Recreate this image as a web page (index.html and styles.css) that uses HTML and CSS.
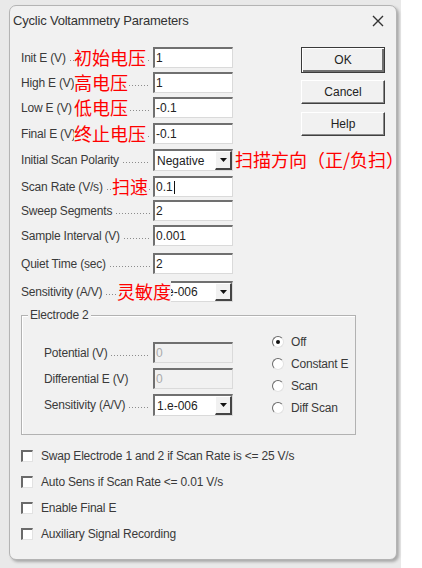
FILE: index.html
```html
<!DOCTYPE html>
<html>
<head>
<meta charset="utf-8">
<title>Cyclic Voltammetry Parameters</title>
<link rel="stylesheet" href="styles.css">
</head>
<body>
<div class="window">
  <div class="titlebar">
    <span class="title">Cyclic Voltammetry Parameters</span>
    <svg class="close" viewBox="0 0 12 12"><path d="M1 1L11 11M11 1L1 11" stroke="#333" stroke-width="1.4" fill="none"/></svg>
  </div>
  <div class="content">
    <div class="top">
      <div class="params">
        <div class="row">
          <div class="label"><span>Init E (V)</span><span class="dots"></span></div>
          <div class="field">1</div>
          <span class="note n-init">初始电压</span>
        </div>
        <div class="row g4">
          <div class="label"><span>High E (V)</span><span class="dots"></span></div>
          <div class="field">1</div>
          <span class="note n-init">高电压</span>
        </div>
        <div class="row g4">
          <div class="label"><span>Low E (V)</span><span class="dots"></span></div>
          <div class="field">-0.1</div>
          <span class="note n-init">低电压</span>
        </div>
        <div class="row g5">
          <div class="label"><span>Final E (V)</span><span class="dots"></span></div>
          <div class="field">-0.1</div>
          <span class="note n-init">终止电压</span>
        </div>
        <div class="row sel-row g5">
          <div class="label"><span>Initial Scan Polarity</span><span class="dots"></span></div>
          <div class="select"><span class="sel-text">Negative</span><span class="arrow"><svg viewBox="0 0 7 4"><polygon points="0,0 7,0 3.5,4" fill="#111"/></svg></span></div>
          <span class="note n-dir">扫描方向（正/负扫）</span>
        </div>
        <div class="row g5">
          <div class="label"><span>Scan Rate (V/s)</span><span class="dots"></span></div>
          <div class="field">0.1<span class="caret"></span></div>
          <span class="note n-rate">扫速</span>
        </div>
        <div class="row g3">
          <div class="label"><span>Sweep Segments</span><span class="dots"></span></div>
          <div class="field">2</div>
        </div>
        <div class="row g4">
          <div class="label"><span>Sample Interval (V)</span><span class="dots"></span></div>
          <div class="field">0.001</div>
        </div>
        <div class="row g7">
          <div class="label"><span>Quiet Time (sec)</span><span class="dots"></span></div>
          <div class="field">2</div>
        </div>
        <div class="row g7">
          <div class="label"><span>Sensitivity (A/V)</span><span class="dots"></span></div>
          <div class="select"><span class="sel-text">1.e-006</span><span class="arrow"><svg viewBox="0 0 7 4"><polygon points="0,0 7,0 3.5,4" fill="#111"/></svg></span></div>
          <span class="note n-sens">灵敏度</span>
        </div>
      </div>
      <div class="buttons">
        <div class="btn default">OK</div>
        <div class="btn">Cancel</div>
        <div class="btn">Help</div>
      </div>
    </div>

    <div class="group">
      <div class="group-title">Electrode 2</div>
      <div class="group-body">
        <div class="gparams">
          <div class="row">
            <div class="glabel"><span>Potential (V)</span><span class="dots"></span></div>
            <div class="field disabled">0</div>
          </div>
          <div class="row g5">
            <div class="glabel"><span>Differential E (V)</span></div>
            <div class="field disabled">0</div>
          </div>
          <div class="row sel-row g5">
            <div class="glabel"><span>Sensitivity (A/V)</span><span class="dots"></span></div>
            <div class="select"><span class="sel-text">1.e-006</span><span class="arrow"><svg viewBox="0 0 7 4"><polygon points="0,0 7,0 3.5,4" fill="#111"/></svg></span></div>
          </div>
        </div>
        <div class="radios">
          <div class="radio-row"><span class="radio checked"></span><span>Off</span></div>
          <div class="radio-row"><span class="radio"></span><span>Constant E</span></div>
          <div class="radio-row"><span class="radio"></span><span>Scan</span></div>
          <div class="radio-row"><span class="radio"></span><span>Diff Scan</span></div>
        </div>
      </div>
    </div>

    <div class="checks">
      <div class="check-row"><span class="check"></span><span>Swap Electrode 1 and 2 if Scan Rate is &lt;= 25 V/s</span></div>
      <div class="check-row"><span class="check"></span><span>Auto Sens if Scan Rate &lt;= 0.01 V/s</span></div>
      <div class="check-row"><span class="check"></span><span>Enable Final E</span></div>
      <div class="check-row"><span class="check"></span><span>Auxiliary Signal Recording</span></div>
    </div>
  </div>
</div>
</body>
</html>
```
FILE: styles.css
```css
* { box-sizing: border-box; }
html, body { margin: 0; padding: 0; }
body {
  width: 422px;
  height: 568px;
  overflow: hidden;
  padding: 5px 0 0 9px;
  background: linear-gradient(to right, #e9e9e9 0, #e9e9e9 401px, #ffffff 401px);
  font-family: "Liberation Sans", Arial, sans-serif;
  font-size: 12px;
  color: #333;
}
.window {
  width: 388px;
  height: 555px;
  background: #f1f1f1;
  border: 1px solid #b4b4b4;
  border-radius: 7px;
  box-shadow: 2px 2px 3px rgba(0, 0, 0, 0.28);
}
.titlebar {
  height: 29px;
  display: flex;
  align-items: center;
  justify-content: space-between;
  padding: 0 12px 0 3px;
}
.title { font-size: 13px; color: #333; letter-spacing: -0.2px; }
.close { width: 12px; height: 12px; display: block; }

.content { padding: 12px 0 0 11px; }
.top { display: flex; }
.params { width: 212px; display: flex; flex-direction: column; }

.row {
  height: 21px;
  display: flex;
  align-items: center;
  position: relative;
  flex-shrink: 0;
}
.row.sel-row { height: 22px; }
.g3 { margin-top: 3px; }
.g4 { margin-top: 4px; }
.g5 { margin-top: 5px; }
.g7 { margin-top: 7px; }

.label, .glabel {
  display: flex;
  align-items: flex-end;
  white-space: nowrap;
  overflow: hidden;
  letter-spacing: -0.2px;
  color: #3a3a3a;
}
.label { width: 132px; }
.glabel { width: 109px; }
.dots {
  flex: 1;
  height: 3px;
  margin: 0 3px 3px 3px;
  background-image: radial-gradient(circle, #8c8c8c 0.7px, transparent 0.9px);
  background-size: 3px 3px;
  background-repeat: repeat-x;
}

.field {
  width: 80px;
  height: 21px;
  background: #fff;
  border-top: 2px solid #707070;
  border-left: 2px solid #707070;
  border-right: 1px solid #dadada;
  border-bottom: 1px solid #dadada;
  padding-left: 1px;
  line-height: 18px;
  color: #222;
  display: flex;
  align-items: center;
}
.field.disabled { background: #f1f1f1; color: #aaa; }
.caret { display: inline-block; width: 1px; height: 13px; background: #111; margin-left: 1px; }

.select {
  width: 80px;
  height: 100%;
  background: #fff;
  border-top: 2px solid #707070;
  border-left: 2px solid #707070;
  border-right: 1px solid #dadada;
  border-bottom: 1px solid #dadada;
  display: flex;
  align-items: stretch;
  color: #222;
}
.sel-text { flex: 1; padding-left: 2px; display: flex; align-items: center; }
.arrow {
  width: 17px;
  background: #f1f1f1;
  border-top: 1px solid #fff;
  border-left: 1px solid #fff;
  border-right: 2px solid #444;
  border-bottom: 2px solid #444;
  display: flex;
  align-items: center;
  justify-content: center;
}
.arrow svg { width: 7px; height: 4px; display: block; }

.note {
  position: absolute;
  top: 0;
  height: 21px;
  line-height: 21px;
  font-family: "Noto Sans CJK SC", "Noto Sans", sans-serif;
  font-size: 18px;
  color: #ff0000;
  background: #f1f1f1;
  white-space: nowrap;
}
.n-init { left: 53px; }
.n-dir { left: 214px; background: transparent; }
.n-rate { left: 91px; }
.n-sens { left: 96px; }

.buttons { margin-left: 68px; display: flex; flex-direction: column; }
.btn {
  width: 84px;
  height: 24px;
  display: flex;
  align-items: center;
  justify-content: center;
  background: #f1f1f1;
  border-top: 1px solid #fff;
  border-left: 1px solid #fff;
  border-right: 1px solid #404040;
  border-bottom: 1px solid #404040;
  box-shadow: inset -1px -1px 0 #8a8a8a;
  margin-bottom: 8px;
  color: #222;
}
.btn.default {
  height: 26px;
  border: 1px solid #3a3a3a;
  box-shadow: inset 1px 1px 0 #fff, inset -2px -2px 0 #707070;
  margin-bottom: 7px;
}

.group {
  width: 335px;
  margin-top: 13px;
  border: 1px solid #b2b2b2;
  box-shadow: inset 1px 1px 0 #fff;
  padding: 0 0 15px 22px;
}
.group-title {
  width: fit-content;
  height: 14px;
  line-height: 14px;
  margin: -8px 0 0 -16px;
  padding: 0 2px;
  background: #f1f1f1;
  letter-spacing: -0.2px;
  color: #3a3a3a;
}
.group-body { display: flex; margin-top: 9px; align-items: flex-start; }
.gparams { display: flex; flex-direction: column; margin-top: 11px; width: 189px; }
.radios { margin-left: 39px; display: flex; flex-direction: column; }
.radio-row { height: 22px; display: flex; align-items: center; letter-spacing: -0.2px; color: #3a3a3a; }
.radio {
  width: 12px;
  height: 12px;
  border-radius: 50%;
  background: #fff;
  border-top: 1px solid #6a6a6a;
  border-left: 1px solid #6a6a6a;
  border-right: 1px solid #e2e2e2;
  border-bottom: 1px solid #e2e2e2;
  margin-right: 7px;
  display: flex;
  align-items: center;
  justify-content: center;
}
.radio.checked::after {
  content: "";
  width: 4px;
  height: 4px;
  border-radius: 50%;
  background: #111;
}

.checks { margin-top: 8px; display: flex; flex-direction: column; }
.check-row { height: 26px; display: flex; align-items: center; letter-spacing: -0.2px; color: #3a3a3a; }
.check {
  width: 12px;
  height: 12px;
  background: #fff;
  border-top: 2px solid #6a6a6a;
  border-left: 2px solid #6a6a6a;
  border-right: 1px solid #e2e2e2;
  border-bottom: 1px solid #e2e2e2;
  margin-right: 8px;
}
```
